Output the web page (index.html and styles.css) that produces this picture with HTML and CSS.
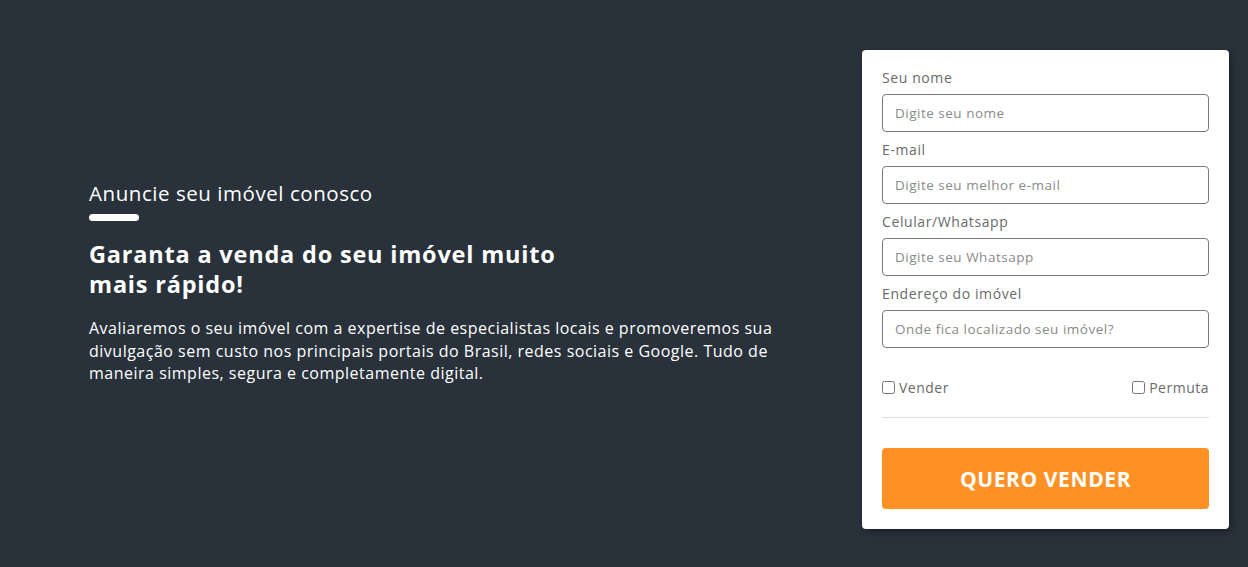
FILE: index.html
```html
<!DOCTYPE html>
<html lang="pt-BR">
<head>
<meta charset="utf-8">
<title>Anuncie seu imóvel</title>
<link rel="stylesheet" href="styles.css">
</head>
<body>
<main class="section">
  <div class="intro">
    <h2 class="kicker">Anuncie seu imóvel conosco</h2>
    <span class="bar"></span>
    <h1 class="headline">Garanta a venda do seu imóvel muito mais rápido!</h1>
    <p class="text">Avaliaremos o seu imóvel com a expertise de especialistas locais e promoveremos sua divulgação sem custo nos principais portais do Brasil, redes sociais e Google. Tudo de maneira simples, segura e completamente digital.</p>
  </div>
  <form class="card">
    <label class="field">
      <span class="label">Seu nome</span>
      <input class="input" type="text" placeholder="Digite seu nome">
    </label>
    <label class="field">
      <span class="label">E-mail</span>
      <input class="input" type="email" placeholder="Digite seu melhor e-mail">
    </label>
    <label class="field">
      <span class="label">Celular/Whatsapp</span>
      <input class="input" type="text" placeholder="Digite seu Whatsapp">
    </label>
    <label class="field">
      <span class="label">Endereço do imóvel</span>
      <input class="input" type="text" placeholder="Onde fica localizado seu imóvel?">
    </label>
    <div class="checks">
      <label class="check"><input type="checkbox"> Vender</label>
      <label class="check"><input type="checkbox"> Permuta</label>
    </div>
    <hr class="divider">
    <button class="submit" type="button">QUERO VENDER</button>
  </form>
</main>
</body>
</html>
```

FILE: styles.css
```css
* { box-sizing: border-box; }
html, body { margin: 0; padding: 0; }
body {
  background: #29313a;
  font-family: "Open Sans", "Noto Sans", sans-serif;
  width: 1248px;
  height: 567px;
  overflow: hidden;
}
.section {
  display: flex;
  align-items: center;
  justify-content: space-between;
  padding: 50px 19px 0 89px;
}
.intro {
  color: #ffffff;
  width: 710px;
  margin-top: -14px;
}
.kicker {
  margin: 0;
  font-size: 20.5px;
  font-weight: 400;
  line-height: 26px;
  letter-spacing: 0.55px;
}
.bar {
  display: block;
  width: 50px;
  height: 7px;
  border-radius: 4px;
  background: #ffffff;
  margin-top: 8px;
}
.headline {
  margin: 18px 0 0;
  font-size: 23.5px;
  font-weight: 700;
  line-height: 30px;
  letter-spacing: 0.8px;
  width: 500px;
}
.text {
  margin: 18px 0 0;
  font-size: 16px;
  line-height: 22.5px;
  letter-spacing: 0.5px;
  width: 700px;
}
.card {
  width: 367px;
  background: #ffffff;
  border-radius: 4px;
  padding: 18px 20px 20px;
  box-shadow: 2px 3px 6px rgba(0,0,0,0.35);
  display: flex;
  flex-direction: column;
}
.field {
  display: flex;
  flex-direction: column;
  margin-bottom: 8px;
}
.label {
  font-size: 14px;
  line-height: 20px;
  letter-spacing: 0.6px;
  color: #6a6a6a;
  margin-bottom: 6px;
}
.input {
  height: 38px;
  border: 1px solid #7a7a7a;
  border-radius: 4px;
  padding: 0 12px;
  font-family: inherit;
  font-size: 13.5px;
  letter-spacing: 0.5px;
  color: #555;
}
.input::placeholder { color: #8a8a8a; }
.checks {
  display: flex;
  justify-content: space-between;
  margin-top: 22px;
  font-size: 14px;
  letter-spacing: 0.5px;
  color: #6a6a6a;
}
.check { display: flex; align-items: center; gap: 4px; }
.check input { margin: 0; width: 13px; height: 13px; }
.divider {
  border: 0;
  border-top: 1px solid #dddddd;
  margin: 20px 0 30px;
}
.submit {
  height: 61px;
  border: 0;
  border-radius: 4px;
  background: #ff9124;
  color: #ffffff;
  font-family: inherit;
  font-size: 21px;
  font-weight: 700;
  letter-spacing: 0.6px;
}
```
